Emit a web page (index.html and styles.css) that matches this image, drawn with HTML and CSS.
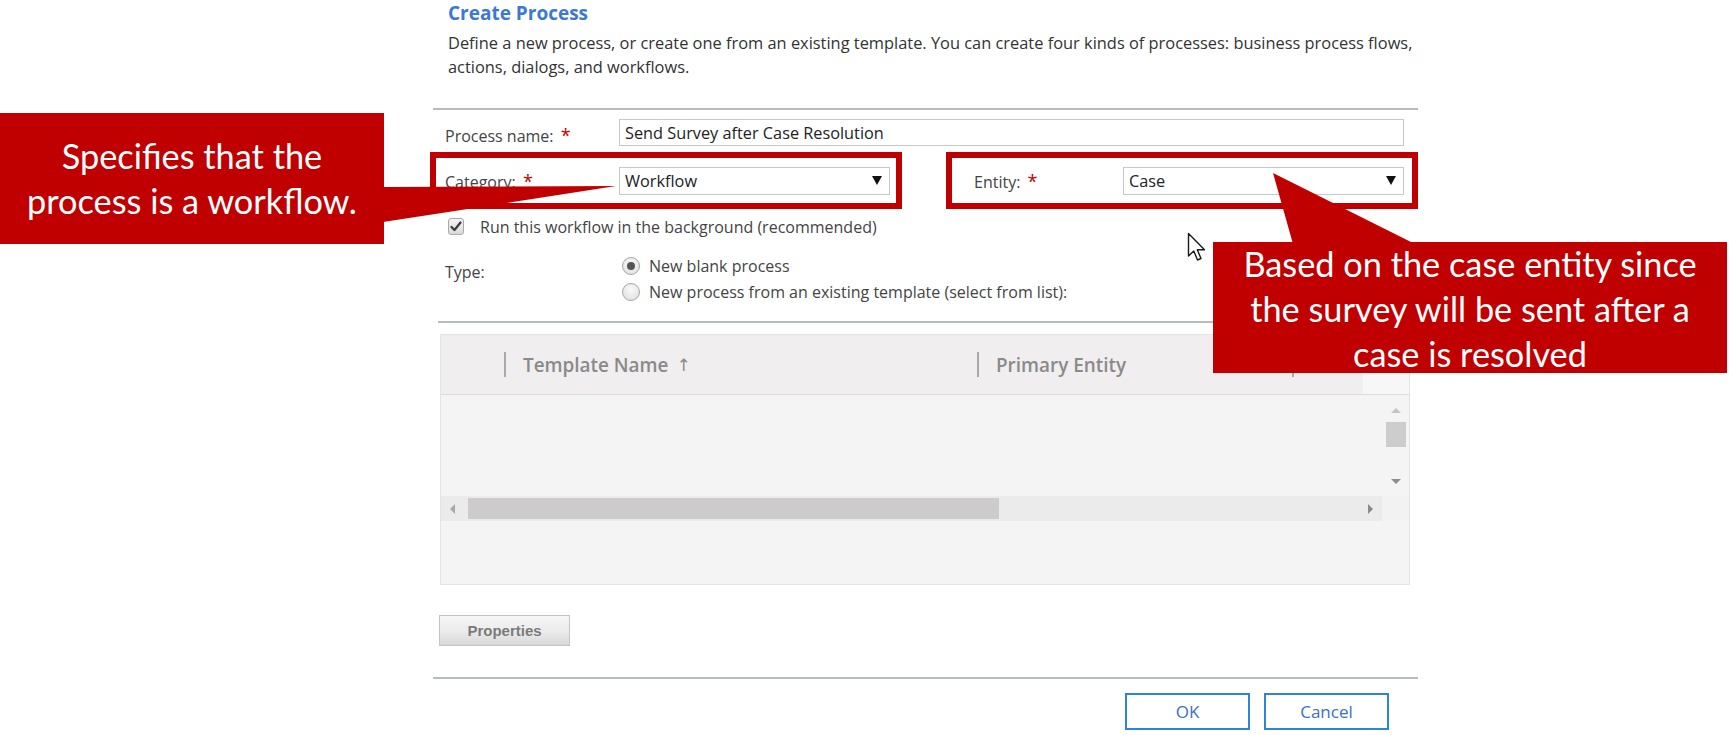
FILE: index.html
```html
<!DOCTYPE html>
<html>
<head>
<meta charset="utf-8">
<title>Create Process</title>
<link rel="stylesheet" href="styles.css">
</head>
<body>
<div class="page">
  <div class="dialog">
    <h1 class="title">Create Process</h1>
    <p class="desc">Define a new process, or create one from an existing template. You can create four kinds of processes: business process flows,<br>actions, dialogs, and workflows.</p>
    <div class="rule rule-top"></div>

    <div class="row name-row">
      <span class="lbl lbl-name">Process name: <span class="req">*</span></span>
      <div class="input name-input">Send Survey after Case Resolution</div>
    </div>

    <div class="row hl-row">
      <div class="hl hl-cat">
        <span class="lbl lbl-cat">Category: <span class="req">*</span></span>
        <div class="input select sel-cat"><span>Workflow</span><span class="caret"></span></div>
      </div>
      <div class="hl hl-ent">
        <span class="lbl lbl-ent">Entity: <span class="req">*</span></span>
        <div class="input select sel-ent"><span>Case</span><span class="caret"></span></div>
      </div>
    </div>

    <div class="row chk-row">
      <span class="chk"><svg width="12" height="11" viewBox="0 0 12 11"><path d="M1.5 6 L4.5 9 L10.5 1.5" fill="none" stroke="#3a3a3a" stroke-width="2.2" stroke-linecap="round" stroke-linejoin="round"/></svg></span>
      <span class="lbl chk-lbl">Run this workflow in the background (recommended)</span>
    </div>

    <div class="row type-row">
      <span class="lbl lbl-type">Type:</span>
      <div class="radios">
        <div class="radio-item"><span class="radio on"></span><span class="lbl">New blank process</span></div>
        <div class="radio-item"><span class="radio"></span><span class="lbl">New process from an existing template (select from list):</span></div>
      </div>
    </div>

    <div class="rule rule-mid"></div>

    <div class="grid">
      <div class="grid-head">
        <div class="hcell hcell-1"><span class="sep"></span><span class="htxt">Template Name</span><span class="harrow">↑</span></div>
        <div class="hcell hcell-2"><span class="sep"></span><span class="htxt">Primary Entity</span></div>
        <div class="hcell hcell-3"><span class="sep"></span></div>
        <div class="hcorner"></div>
      </div>
      <div class="grid-body">
        <div class="grid-view"></div>
        <div class="vscroll">
          <span class="arr arr-up"></span>
          <span class="vthumb"></span>
          <span class="arr arr-down"></span>
        </div>
      </div>
      <div class="hscroll">
        <div class="htrack">
          <span class="arr arr-left"></span>
          <span class="hthumb"></span>
          <span class="arr arr-right"></span>
        </div>
        <div class="scorner"></div>
      </div>
      <div class="grid-foot"></div>
    </div>

    <button class="props">Properties</button>

    <div class="rule rule-bot"></div>

    <div class="actions">
      <button class="btn">OK</button>
      <button class="btn">Cancel</button>
    </div>
  </div>

  <svg class="pointers" width="1730" height="735" viewBox="0 0 1730 735">
    <polygon points="383,187 616,186 383,222" fill="#c00000"/>
    <polygon points="1273,173 1293,244 1415,244" fill="#c00000"/>
  </svg>

  <div class="callout callout-left">Specifies that the<br>process is a workflow.</div>
  <div class="callout callout-right">Based on the case entity since<br>the survey will be sent after a<br>case is resolved</div>

  <svg class="cursor" width="20" height="32" viewBox="0 0 20 32">
    <path d="M1.5 1.5 L1.5 24 L6.8 19 L10.5 28 L14 26.5 L10.3 17.8 L17.5 17.8 Z" fill="#fff" stroke="#1a1a1a" stroke-width="1.4" stroke-linejoin="round"/>
  </svg>
</div>
</body>
</html>
```

FILE: styles.css
```css
* { box-sizing: border-box; }
html, body { margin: 0; padding: 0; background: #fff; }
body {
  width: 1730px;
  height: 735px;
  overflow: hidden;
  font-family: "Open Sans", "Noto Sans", sans-serif;
  color: #333;
}
.page { position: relative; width: 1730px; height: 735px; }

.dialog { margin-left: 433px; width: 985px; }

.title {
  margin: 0 0 0 15px;
  font-size: 19px;
  line-height: 26px;
  font-weight: 700;
  color: #3b78d6;
}
.desc {
  margin: 5px 0 0 15px;
  font-size: 16.4px;
  line-height: 24px;
  color: #333;
  white-space: nowrap;
}
.rule { height: 2px; background: #b6bac1; }
.rule-top { margin-top: 29px; }
.rule-mid { margin: 16px 8px 0 5px; }
.rule-bot { margin-top: 31px; }

.row { display: flex; align-items: center; }
.lbl { font-size: 16px; color: #444; white-space: nowrap; }
.req { color: #c00000; font-size: 18px; margin-left: 3px; }

.name-row { margin-top: 8px; padding-left: 12px; }
.lbl-name { width: 174px; padding-top: 5px; }
.input {
  display: flex;
  align-items: center;
  border: 1px solid #c8c8c8;
  background: #fff;
  font-size: 16.3px;
  color: #222;
  padding-left: 5px;
  white-space: nowrap;
}
.name-input { width: 785px; height: 27px; }

.hl-row { margin-top: 5px; margin-left: -3px; gap: 44px; }
.hl {
  width: 472px;
  height: 57px;
  border: 6px solid #c00000;
  display: flex;
  align-items: center;
}
.hl-cat { padding-left: 9px; }
.hl-ent { padding-left: 22px; }
.lbl-cat { width: 174px; }
.lbl-ent { width: 149px; }
.select { height: 28px; justify-content: space-between; padding-right: 7px; }
.sel-cat { width: 271px; }
.sel-ent { width: 281px; }
.caret {
  width: 0; height: 0;
  border-left: 5px solid transparent;
  border-right: 5px solid transparent;
  border-top: 9px solid #111;
}

.chk-row { margin-top: 8px; padding-left: 15px; height: 18px; }
.chk {
  width: 16px; height: 17px;
  border: 1px solid #a9a9a9;
  border-radius: 3px;
  background: linear-gradient(#f4f4f4, #d9d9d9);
  display: flex; align-items: center; justify-content: center;
}
.chk-lbl { margin-left: 16px; padding-top: 2px; }

.type-row { margin-top: 18px; padding-left: 12px; align-items: flex-start; }
.lbl-type { width: 177px; padding-top: 8px; }
.radio-item { display: flex; align-items: center; height: 26px; }
.radio {
  width: 18px; height: 18px;
  border-radius: 50%;
  border: 1px solid #a6a6a6;
  background: radial-gradient(circle at 50% 35%, #fafafa, #dcdcdc);
  margin-right: 9px;
  display: flex; align-items: center; justify-content: center;
}
.radio.on::after {
  content: "";
  width: 8px; height: 8px;
  border-radius: 50%;
  background: #555;
}

.grid {
  margin: 11px 0 0 7px;
  width: 970px;
  height: 251px;
  border: 1px solid #e4e4e4;
  background: #f4f4f4;
  display: flex;
  flex-direction: column;
}
.grid-head {
  height: 60px;
  background: #f0eeef;
  border-bottom: 1px solid #dcdcdc;
  display: flex;
  align-items: center;
  padding-left: 63px;
  flex: none;
}
.hcell { display: flex; align-items: center; height: 100%; }
.hcell-1 { width: 473px; }
.hcell-2 { width: 315px; }
.hcell-3 { width: 71px; }
.hcorner { flex: 1; height: 100%; background: #f7f7f7; }
.sep { width: 2px; height: 25px; background: #a9a9a9; }
.htxt {
  margin-left: 17px;
  font-size: 18.9px;
  font-weight: 600;
  color: #8a8a8a;
  white-space: nowrap;
}
.harrow { margin-left: 8px; font-size: 17px; color: #8a8a8a; font-family: "DejaVu Sans", sans-serif; }

.grid-body { height: 101px; display: flex; flex: none; }
.grid-view { flex: 1; }
.vscroll {
  width: 27px;
  display: flex;
  flex-direction: column;
  align-items: center;
  padding-top: 13px;
}
.vthumb { width: 20px; height: 25px; background: #cdcdcd; margin-top: 9px; }
.arr { width: 0; height: 0; display: block; }
.arr-up { border-left: 5px solid transparent; border-right: 5px solid transparent; border-bottom: 5px solid #c4c4c4; }
.arr-down { border-left: 5px solid transparent; border-right: 5px solid transparent; border-top: 5px solid #8e8e8e; margin-top: 32px; }

.hscroll { height: 25px; display: flex; flex: none; }
.htrack {
  flex: 1;
  background: #ebebeb;
  display: flex;
  align-items: center;
  padding-left: 9px;
  padding-right: 9px;
}
.arr-left { border-top: 5px solid transparent; border-bottom: 5px solid transparent; border-right: 5px solid #a8a8a8; }
.arr-right { border-top: 5px solid transparent; border-bottom: 5px solid transparent; border-left: 5px solid #8a8a8a; margin-left: auto; }
.hthumb { width: 531px; height: 21px; background: #cdcbcb; margin-left: 13px; }
.scorner { width: 27px; background: #f2f2f2; }
.grid-foot { flex: 1; }

.props {
  display: block;
  margin: 30px 0 0 6px;
  width: 131px;
  height: 31px;
  border: 1px solid #c4c4c4;
  background: linear-gradient(#f6f6f6 0%, #ececec 50%, #d9d9d9 100%);
  font-family: "Liberation Sans", Arial, sans-serif;
  font-weight: 700;
  font-size: 15px;
  color: #7b7b7b;
  padding: 0;
}

.actions {
  margin-top: 14px;
  display: flex;
  justify-content: flex-end;
  gap: 14px;
  padding-right: 29px;
}
.btn {
  width: 125px;
  height: 37px;
  border: 2px solid #2b86d9;
  background: #fff;
  font-family: "Open Sans", "Noto Sans", sans-serif;
  font-size: 17px;
  color: #3c6fc6;
  padding: 0;
}

.pointers { position: absolute; left: 0; top: 0; pointer-events: none; }

.callout {
  position: absolute;
  background: #c00000;
  color: #fff;
  font-family: Lato, "Open Sans", sans-serif;
  text-align: center;
  display: flex;
  align-items: center;
  justify-content: center;
  white-space: nowrap;
}
.callout-left {
  left: 0; top: 113px;
  width: 384px; height: 131px;
  font-size: 34.3px;
  line-height: 45px;
  padding-bottom: 2px;
}
.callout-right {
  left: 1213px; top: 242px;
  width: 514px; height: 131px;
  font-size: 34.3px;
  line-height: 45px;
  padding-top: 1px;
}
.cursor { position: absolute; left: 1187px; top: 232px; }
```
